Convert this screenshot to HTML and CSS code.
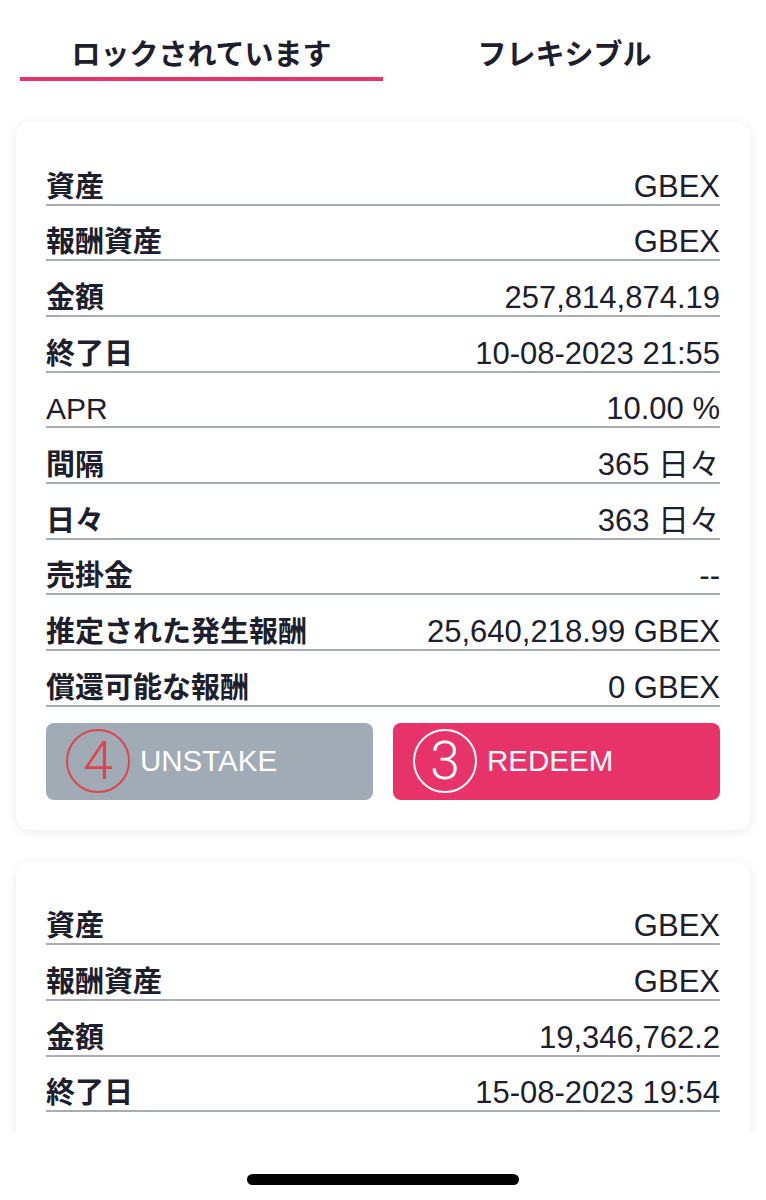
FILE: index.html
```html
<!DOCTYPE html>
<html lang="ja">
<head>
    <meta charset="UTF-8">
    <meta name="viewport" content="width=device-width, initial-scale=1.0">
    <title>ステーキング</title>
    <link rel="stylesheet" href="styles.css">
</head>
<body>
    <div class="screen">
        <!-- タブ -->
        <div class="tabs">
            <div class="tab active">ロックされています</div>
            <div class="tab">フレキシブル</div>
        </div>

        <!-- ステーク 1 -->
        <div class="card">
            <div class="row"><span class="label">資産</span><span class="value">GBEX</span></div>
            <div class="row"><span class="label">報酬資産</span><span class="value">GBEX</span></div>
            <div class="row"><span class="label">金額</span><span class="value">257,814,874.19</span></div>
            <div class="row"><span class="label">終了日</span><span class="value">10-08-2023 21:55</span></div>
            <div class="row"><span class="label latin">APR</span><span class="value">10.00 %</span></div>
            <div class="row"><span class="label">間隔</span><span class="value">365 日々</span></div>
            <div class="row"><span class="label">日々</span><span class="value">363 日々</span></div>
            <div class="row"><span class="label">売掛金</span><span class="value">--</span></div>
            <div class="row"><span class="label">推定された発生報酬</span><span class="value">25,640,218.99 GBEX</span></div>
            <div class="row"><span class="label">償還可能な報酬</span><span class="value">0 GBEX</span></div>
            <div class="actions">
                <button class="btn btn-unstake"><span class="mark mark-red">4</span>UNSTAKE</button>
                <button class="btn btn-redeem"><span class="mark mark-white">3</span>REDEEM</button>
            </div>
        </div>

        <!-- ステーク 2 -->
        <div class="card">
            <div class="row"><span class="label">資産</span><span class="value">GBEX</span></div>
            <div class="row"><span class="label">報酬資産</span><span class="value">GBEX</span></div>
            <div class="row"><span class="label">金額</span><span class="value">19,346,762.2</span></div>
            <div class="row"><span class="label">終了日</span><span class="value">15-08-2023 19:54</span></div>
        </div>
    </div>

    <div class="home-area">
        <div class="home-indicator"></div>
    </div>
</body>
</html>
```

FILE: styles.css
```css
/* 基本 */
body {
    margin: 0;
    background: #ffffff;
    color: #1d202c;
    font-family: 'Liberation Sans', 'Noto Sans CJK JP', sans-serif;
}

.screen {
    height: 1133px;
    overflow: hidden;
}

/* タブ */
.tabs {
    display: flex;
    padding: 0 20px;
}

.tab {
    flex: 1;
    text-align: center;
    font-family: 'Noto Sans CJK JP', sans-serif;
    font-weight: bold;
    font-size: 29px;
    line-height: 44px;
    padding: 30px 0 3px;
    border-bottom: 4px solid transparent;
}

.tab.active {
    border-bottom-color: #e8336a;
}

/* カード */
.card {
    margin: 41px 16px 0;
    padding: 28px 30px 30px;
    background: #fff;
    border-radius: 14px;
    box-shadow: 0 2px 12px rgba(0,0,0,0.09);
}

.card + .card {
    margin-top: 32px;
}

.row {
    display: flex;
    justify-content: space-between;
    align-items: flex-end;
    box-sizing: border-box;
    height: 55.67px;
    border-bottom: 2px solid #a9abb7;
    font-size: 31px;
    line-height: 34px;
}

.label {
    padding-bottom: 3px;
    font-family: 'Noto Sans CJK JP', sans-serif;
    font-weight: bold;
    font-size: 29px;
}

.label.latin {
    padding-bottom: 0;
    font-family: 'Liberation Sans', sans-serif;
    font-weight: normal;
    font-size: 30px;
}

/* ボタン */
.actions {
    display: flex;
    gap: 20px;
    margin-top: 16px;
}

.btn {
    flex: 1;
    display: flex;
    align-items: center;
    height: 77px;
    padding: 0 0 0 20px;
    border: none;
    border-radius: 8px;
    color: #fff;
    font-family: 'Liberation Sans', sans-serif;
    font-size: 29.5px;
}

.btn-unstake {
    background: #a0abb6;
}

.btn-redeem {
    background: #e8336a;
}

.mark {
    box-sizing: border-box;
    width: 64px;
    height: 64px;
    margin-right: 10px;
    border-radius: 50%;
    border: 2px solid;
    display: flex;
    justify-content: center;
    align-items: center;
    font-family: 'Roboto', sans-serif;
    font-weight: 300;
    font-size: 54px;
    line-height: 1;
}

.mark-red {
    color: #e0434b;
    border-color: #e0434b;
}

.mark-white {
    color: #fff;
    border-color: #fff;
}

/* ホームインジケーター */
.home-area {
    height: 67px;
    display: flex;
    justify-content: center;
    padding-top: 41px;
    box-sizing: border-box;
}

.home-indicator {
    width: 272px;
    height: 11px;
    border-radius: 6px;
    background: #000;
}
```
